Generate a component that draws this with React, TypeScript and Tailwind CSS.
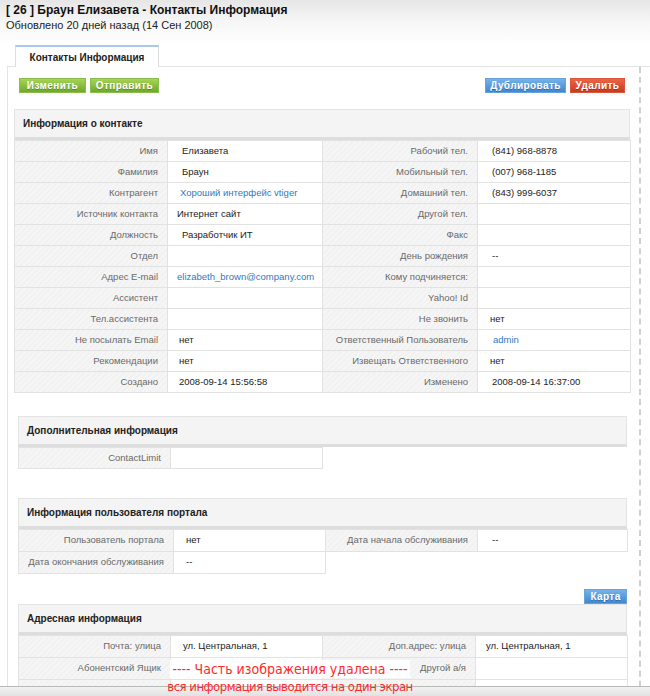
import React from 'react';

type Row = { l: string; v?: string; pl?: number; link?: boolean };

const stripes =
  'bg-[repeating-linear-gradient(135deg,#f1f1f1_0px,#f1f1f1_2px,#f6f6f6_2px,#f6f6f6_4px)]';

function Label({ text }: { text: string }) {
  return (
    <td className={`border border-[#e2e2e2] ${stripes} text-right pr-[9px] text-[#6a6a6a] whitespace-nowrap`}>
      {text}
    </td>
  );
}

function Value({ row }: { row?: Row }) {
  const pad = row?.pl ?? 12;
  return (
    <td
      className={`border border-[#e2e2e2] bg-white whitespace-nowrap ${row?.link ? 'text-[#2b7bc4]' : 'text-[#222]'}`}
      style={{ paddingLeft: pad }}
    >
      {row?.v}
    </td>
  );
}

function Btn({ text, color, w }: { text: string; color: 'green' | 'blue' | 'red'; w: string }) {
  const c = {
    green: 'bg-gradient-to-b from-[#a6d454] to-[#6fa82b] border-[#8bbd4a]',
    blue: 'bg-gradient-to-b from-[#74b3ea] to-[#3f87d0] border-[#6aa2da]',
    red: 'bg-gradient-to-b from-[#ec6446] to-[#c93a21] border-[#d9563a]',
  }[color];
  return (
    <div
      className={`${c} ${w} h-[15px] border flex items-center justify-center text-white text-[10px] font-bold tracking-[0.4px] [text-shadow:0_1px_0_rgba(0,0,0,0.25)]`}
    >
      {text}
    </div>
  );
}

function SectionHead({ title }: { title: string }) {
  return (
    <div className="h-[31px] bg-[#f4f4f4] border border-[#e4e4e4] border-b-[3px] border-b-[#dddddd] flex items-center pl-[8px] text-[10px] font-bold text-[#222]">
      {title}
    </div>
  );
}

function Grid({ rows, cols, h = 21 }: { rows: (Row | null)[][]; cols: number[]; h?: number }) {
  return (
    <table className="border-collapse table-fixed text-[9.5px]" style={{ width: cols.reduce((a, b) => a + b, 0) }}>
      <colgroup>
        {cols.map((c, i) => (
          <col key={i} style={{ width: c }} />
        ))}
      </colgroup>
      <tbody>
        {rows.map((r, i) => (
          <tr key={i} style={{ height: h }}>
            {r.map((cell, j) =>
              cell ? (
                <React.Fragment key={j}>
                  <Label text={cell.l} />
                  <Value row={cell} />
                </React.Fragment>
              ) : (
                <React.Fragment key={j}>
                  <td />
                  <td />
                </React.Fragment>
              ),
            )}
          </tr>
        ))}
      </tbody>
    </table>
  );
}

const contact: Row[][] = [
  [{ l: 'Имя', v: 'Елизавета', pl: 14 }, { l: 'Рабочий тел.', v: '(841) 968-8878', pl: 14 }],
  [{ l: 'Фамилия', v: 'Браун', pl: 14 }, { l: 'Мобильный тел.', v: '(007) 968-1185', pl: 14 }],
  [{ l: 'Контрагент', v: 'Хороший интерфейс vtiger', pl: 12, link: true }, { l: 'Домашний тел.', v: '(843) 999-6037', pl: 14 }],
  [{ l: 'Источник контакта', v: 'Интернет сайт', pl: 9 }, { l: 'Другой тел.' }],
  [{ l: 'Должность', v: 'Разработчик ИТ', pl: 14 }, { l: 'Факс' }],
  [{ l: 'Отдел' }, { l: 'День рождения', v: '--', pl: 14 }],
  [{ l: 'Адрес E-mail', v: 'elizabeth_brown@company.com', pl: 9, link: true }, { l: 'Кому подчиняется:' }],
  [{ l: 'Ассистент' }, { l: 'Yahoo! Id' }],
  [{ l: 'Тел.ассистента' }, { l: 'Не звонить', v: 'нет', pl: 12 }],
  [{ l: 'Не посылать Email', v: 'нет', pl: 11 }, { l: 'Ответственный Пользователь', v: 'admin', pl: 15, link: true }],
  [{ l: 'Рекомендации', v: 'нет', pl: 11 }, { l: 'Извещать Ответственного', v: 'нет', pl: 12 }],
  [{ l: 'Создано', v: '2008-09-14 15:56:58', pl: 11 }, { l: 'Изменено', v: '2008-09-14 16:37:00', pl: 14 }],
];

export default function App() {
  return (
    <div className="relative w-[650px] h-[696px] overflow-hidden bg-white font-['Liberation_Sans',Arial,sans-serif]">
      {/* header */}
      <div className="h-[45px] bg-gradient-to-b from-[#e6e6e6] via-[#f7f7f7] to-white px-[6px] pt-[2px]">
        <div className="text-[12px] font-bold text-[#111] leading-[16px]">[ 26 ] Браун Елизавета - Контакты Информация</div>
        <div className="text-[11px] text-[#222] leading-[14px]">Обновлено 20 дней назад (14 Сен 2008)</div>
      </div>

      {/* tab */}
      <div className="pl-[15px] flex relative z-10">
        <div className="w-[144px] h-[22px] -mb-px bg-white border border-[#dcdcdc] border-b-0 border-t-2 border-t-[#a9c9ea] flex items-center justify-center text-[10px] font-bold text-[#222]">
          Контакты Информация
        </div>
      </div>

      {/* body */}
      <div className="ml-[7px] border-t border-l border-[#e4e4e4] flex">
        <div className="w-[629px]">
          <div className="flex justify-between pl-[11px] pr-[12px] pt-[11px]">
            <div className="flex gap-[4px]">
              <Btn text="Изменить" color="green" w="w-[67px]" />
              <Btn text="Отправить" color="green" w="w-[69px]" />
            </div>
            <div className="flex gap-[4px]">
              <Btn text="Дублировать" color="blue" w="w-[81px]" />
              <Btn text="Удалить" color="red" w="w-[55px]" />
            </div>
          </div>

          <div className="ml-[6px] w-[616px] mt-[16px]">
            <SectionHead title="Информация о контакте" />
            <Grid rows={contact} cols={[153, 155, 155, 153]} />
          </div>

          <div className="ml-[10px] w-[609px] mt-[23px]">
            <SectionHead title="Дополнительная информация" />
            <Grid rows={[[{ l: 'ContactLimit' }, null]]} cols={[152, 152, 152, 153]} />
          </div>

          <div className="ml-[10px] w-[609px] mt-[29px]">
            <SectionHead title="Информация пользователя портала" />
            <Grid
              h={22}
              rows={[
                [{ l: 'Пользователь портала', v: 'нет', pl: 12 }, { l: 'Дата начала обслуживания', v: '--', pl: 14 }],
                [{ l: 'Дата окончания обслуживания', v: '--', pl: 12 }, null],
              ]}
              cols={[155, 152, 152, 150]}
            />
          </div>

          <div className="ml-[10px] w-[609px] mt-[15px]">
            <div className="flex justify-end">
              <Btn text="Карта" color="blue" w="w-[43px]" />
            </div>
            <SectionHead title="Адресная информация" />
            <Grid
              h={22}
              rows={[
                [{ l: 'Почта: улица', v: 'ул. Центральная, 1', pl: 12 }, { l: 'Доп.адрес: улица', v: 'ул. Центральная, 1', pl: 10 }],
                [{ l: 'Абонентский Ящик' }, { l: 'Другой а/я' }],
                [{ l: 'Почта: город' }, { l: 'Доп.адрес: город' }],
              ]}
              cols={[152, 152, 153, 152]}
            />
          </div>
        </div>
        <div className="ml-[2px] w-0 h-[640px] border-l-2 border-dashed border-[#d0d0d0]" />
      </div>

      {/* bottom splitter */}
      <div className="absolute left-0 right-0 bottom-0 h-[10px] border-t border-[#b8b8b8] bg-gradient-to-b from-[#f2f2f2] to-[#e2e2e2]" />

      {/* removed-part notice */}
      <div className="absolute left-[130px] top-[660px] w-[320px] flex flex-col items-center leading-[18px] text-[#ff2a2a] whitespace-nowrap font-['DejaVu_Sans_Condensed','DejaVu_Sans',sans-serif]">
        <span className="bg-white px-[2px] text-[14px]">---- Часть изображения удалена ----</span>
        <span className="px-[2px] text-[13px] tracking-[-0.5px]">вся информация выводится на один экран</span>
      </div>
    </div>
  );
}
